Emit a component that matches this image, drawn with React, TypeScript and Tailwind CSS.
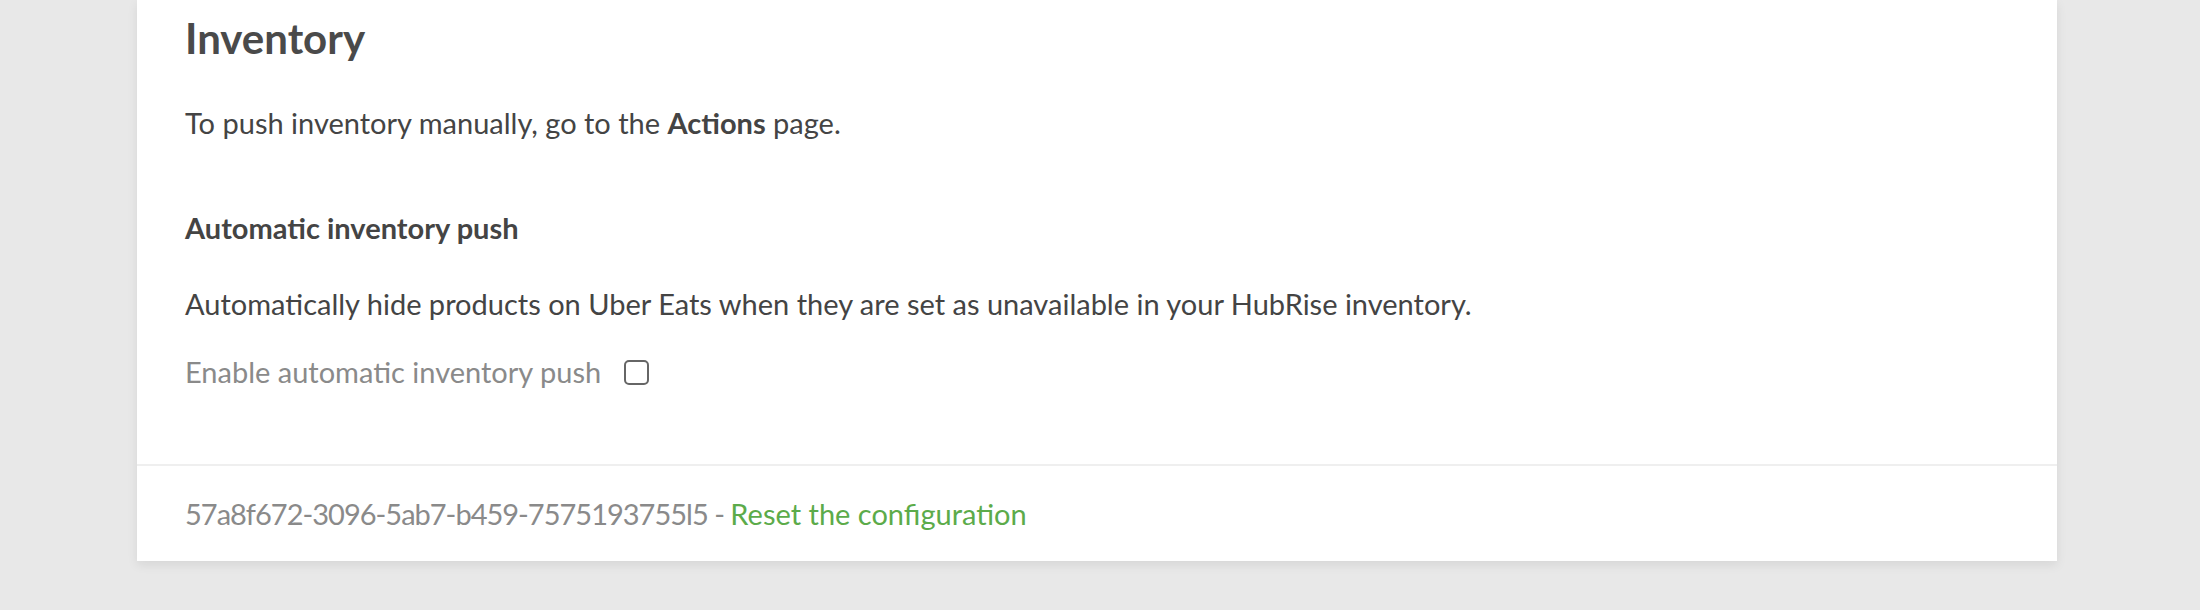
export default function App() {
  return (
    <div className="min-h-[610px] bg-[#e8e8e8] font-['Lato',sans-serif]">
      <div className="ml-[137px] w-[1920px] bg-white shadow-[0_4px_10px_rgba(0,0,0,0.08)]">
        {/* Inventory section */}
        <div className="px-[48px] pt-[14px] pb-[71px] border-b-2 border-[#efefef]">
          <h2 className="text-[42px] leading-[48px] font-bold text-[#4a4a4a]">Inventory</h2>
          <p className="mt-[40px] text-[29px] leading-[42px] text-[#444]">
            To push inventory manually, go to the <strong className="font-bold">Actions</strong> page.
          </p>
          <h3 className="mt-[66px] text-[29px] leading-[36px] font-bold text-[#444]">
            Automatic inventory push
          </h3>
          <p className="mt-[37px] text-[29px] leading-[42px] text-[#444]">
            Automatically hide products on Uber Eats when they are set as unavailable in your HubRise inventory.
          </p>
          <label className="mt-[26px] flex items-center h-[42px] text-[29px] text-[#8a8a8a]">
            <span>Enable automatic inventory push</span>
            <span className="ml-[23px] w-[25px] h-[25px] rounded-[5px] border-2 border-[#666] bg-white" />
          </label>
        </div>
        {/* Footer */}
        <div className="px-[48px] h-[95px] flex items-center text-[29px] text-[#8a8a8a]">
          <span className="tracking-[-1px]">57a8f672-3096-5ab7-b459-7575193755l5 -&nbsp;</span>
          <a className="text-[#5cab4a]" href="#">Reset the configuration</a>
        </div>
      </div>
    </div>
  )
}
